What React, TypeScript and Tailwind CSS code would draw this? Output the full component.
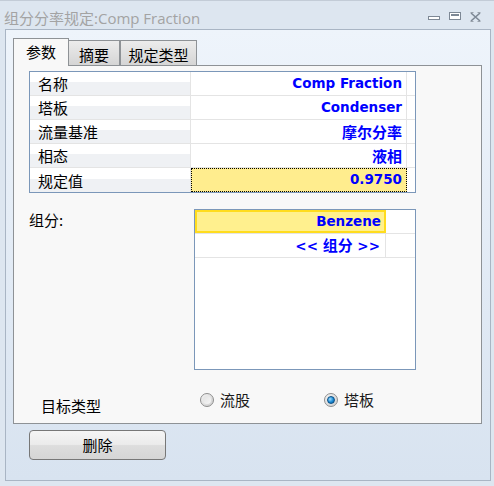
const cjk = "font-['Noto_Sans_CJK_SC',sans-serif]";
const val = "font-['DejaVu_Sans','Noto_Sans_CJK_SC',sans-serif] font-bold text-[13.5px] text-[#0000ff]";

type Row = { label: string; value: string; cjkValue?: boolean; active?: boolean };

const rows: Row[] = [
  { label: "名称", value: "Comp Fraction" },
  { label: "塔板", value: "Condenser" },
  { label: "流量基准", value: "摩尔分率", cjkValue: true },
  { label: "相态", value: "液相", cjkValue: true },
  { label: "规定值", value: "0.9750", active: true },
];

function Radio({ checked, label }: { checked: boolean; label: string }) {
  return (
    <div className="flex items-center gap-[6px]">
      <div className="w-[14px] h-[14px] rounded-full border border-[#8d8d8d] bg-gradient-to-br from-[#f4f4f4] to-[#cfcfcf] flex items-center justify-center">
        {checked ? (
          <div className="w-[8px] h-[8px] rounded-full bg-[radial-gradient(circle_at_35%_35%,#9fdcff,#1a8ad4_55%,#075a9a)] border border-[#0b4f86]" />
        ) : (
          <div className="w-[8px] h-[8px] rounded-full bg-gradient-to-br from-[#e2e2e2] to-[#f6f6f6]" />
        )}
      </div>
      <span className={`${cjk} text-[15px] leading-none text-[#1a1a1a]`}>{label}</span>
    </div>
  );
}

export default function App() {
  return (
    <div className="w-[494px] h-[486px] bg-[#dde6f0] overflow-hidden">
      {/* title bar */}
      <div className="h-[29px] flex items-start pt-[8px] pl-[4px] pr-[13px] border-t border-[#c3ccd7]">
        <span className={`font-['Open_Sans','Noto_Sans_CJK_SC',sans-serif] text-[15px] leading-[18px] text-[#a3a3a3]`}>
          组分分率规定:Comp Fraction
        </span>
        <div className="ml-auto flex items-start gap-[9px] pt-[3px]">
          <svg width="12" height="9" viewBox="0 0 12 9">
            <rect x="0.5" y="4.5" width="11" height="3" fill="#fff" stroke="#7d8895" />
          </svg>
          <svg width="12" height="9" viewBox="0 0 12 9">
            <rect x="0.5" y="0.5" width="11" height="7" fill="#fff" stroke="#7d8895" />
            <rect x="2" y="2" width="8" height="2" fill="#7d8895" />
          </svg>
          <svg width="11" height="10" viewBox="0 0 11 10">
            <path d="M1 1 L10 9 M10 1 L1 9" stroke="#7d8895" strokeWidth="1.6" />
            <path d="M0.5 0.5 h3 M7.5 0.5 h3 M0.5 9.5 h3 M7.5 9.5 h3" stroke="#9aa3ad" strokeWidth="1" />
          </svg>
        </div>
      </div>

      {/* window body */}
      <div className="ml-[5px] w-[486px] h-[452px] border border-[#a9b5c4] bg-gradient-to-b from-[#eef4fb] to-[#d8e3f0] pl-[7px] pt-[8px]">
        {/* tabs */}
        <div className={`flex items-end h-[27px] ${cjk} text-[15px] leading-none text-black`}>
          <div className="relative z-10 w-[56px] h-[28px] -mb-[1px] border border-b-0 border-[#8e9296] bg-[#f8f8f8] flex items-center justify-center pb-[3px]">
            参数
          </div>
          <div className="w-[51px] h-[25px] border border-b-0 border-l-0 border-[#8e9296] bg-gradient-to-b from-[#ececec] to-[#d5d5d5] flex items-center justify-center pt-[2px]">
            摘要
          </div>
          <div className="w-[77px] h-[25px] border border-b-0 border-[#8e9296] bg-gradient-to-b from-[#ececec] to-[#d5d5d5] flex items-center justify-center pt-[2px]">
            规定类型
          </div>
        </div>

        {/* tab content */}
        <div className="w-[469px] h-[359px] border border-[#8e9296] bg-[#f8f8f8] pt-[5px] pl-[15px]">
          <div className="w-[387px] border border-[#7b97b9] bg-white">
            {rows.map((r, i) => (
              <div key={r.label} className={`flex h-[24px] ${i < rows.length - 1 ? "border-b border-[#e4e4e4]" : "h-[23px]"}`}>
                <div className={`w-[161px] border-r border-[#e4e4e4] bg-[linear-gradient(to_bottom,#ffffff_45%,#eff1f4_45%)] flex items-center pl-[8px] ${cjk} text-[15px] leading-none text-black`}>
                  {r.label}
                </div>
                <div
                  className={`w-[216px] border-r border-[#e4e4e4] flex items-center justify-end pr-[4px] ${
                    r.active ? "bg-[#ffed8e] border border-dotted border-black" : ""
                  }`}
                >
                  {r.cjkValue ? (
                    <span className={`${cjk} font-bold text-[15px] leading-none text-[#0000ff]`}>{r.value}</span>
                  ) : (
                    <span className={`${val} leading-none`}>{r.value}</span>
                  )}
                </div>
                <div className="flex-1" />
              </div>
            ))}
          </div>

          {/* components */}
          <div className="flex mt-[16px]">
            <div className={`w-[165px] pt-[2px] ${cjk} text-[15px] leading-[18px] text-black`}>组分:</div>
            <div className="w-[222px] h-[161px] border border-[#7b97b9] bg-white">
              <div className="flex h-[24px] border-b border-[#e4e4e4]">
                <div className="w-[191px] border-2 border-[#ffdc1e] bg-[#fff08e] flex items-center justify-end pr-[3px]">
                  <span className={`${val} leading-none`}>Benzene</span>
                </div>
                <div className="flex-1" />
              </div>
              <div className="flex h-[24px] border-b border-[#e4e4e4]">
                <div className="w-[191px] border-r border-[#e4e4e4] flex items-center justify-end pr-[5px]">
                  <span className={`${val} leading-none`}>
                    {"<< "}
                    <span className={`${cjk} text-[15px]`}>组分</span>
                    {" >>"}
                  </span>
                </div>
                <div className="flex-1" />
              </div>
            </div>
          </div>

          {/* target type */}
          <div className="flex items-start mt-[22px]">
            <div className={`w-[171px] pl-[12px] pt-[6px] ${cjk} text-[15px] leading-none text-black`}>目标类型</div>
            <div className="w-[124px]">
              <Radio checked={false} label="流股" />
            </div>
            <Radio checked={true} label="塔板" />
          </div>
        </div>

        {/* delete button */}
        <button
          className={`mt-[6px] ml-[16px] w-[137px] h-[30px] rounded-[4px] border border-[#777777] bg-[linear-gradient(to_bottom,#f5f5f5,#ebebeb_48%,#dddddd_52%,#d5d5d5)] ${cjk} text-[15px] leading-none text-black pb-[2px]`}
        >
          删除
        </button>
      </div>
    </div>
  );
}
